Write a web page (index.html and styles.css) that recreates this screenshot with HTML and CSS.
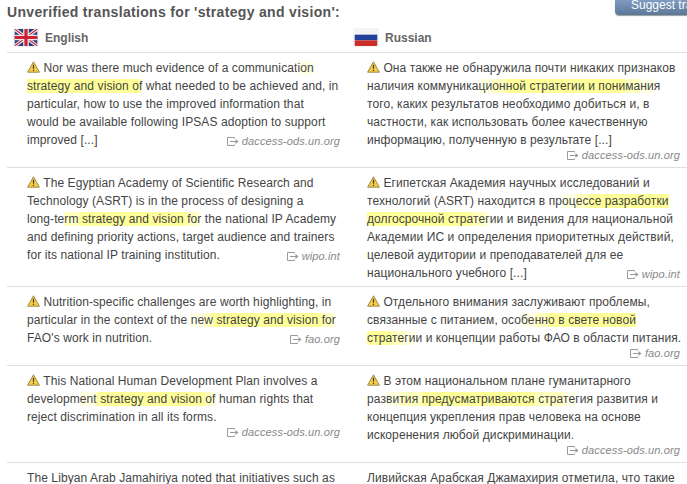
FILE: index.html
```html
<!DOCTYPE html>
<html lang="en">
<head>
<meta charset="utf-8">
<title>Unverified translations</title>
<link rel="stylesheet" href="styles.css">
</head>
<body>
<svg class="defs" width="0" height="0" aria-hidden="true">
  <symbol id="warn" viewBox="0 0 13 12">
    <path d="M6.5 .8 L12.4 11.2 H.6 Z" fill="#f5cc45" stroke="#9a8a50" stroke-width="1" stroke-linejoin="round"/>
    <path d="M6.5 3.8 V7.8 M6.5 8.8 V10" stroke="#4a3c10" stroke-width="1.2"/>
  </symbol>
  <symbol id="out" viewBox="0 0 12 9">
    <path d="M7.5 1.5 V.5 H.5 V8.5 H7.5 V7.5" fill="none" stroke="#999" stroke-width="1"/>
    <path d="M3 4.5 H9" stroke="#999" stroke-width="1"/>
    <path d="M8.5 2 L11.5 4.5 L8.5 7 Z" fill="#999"/>
  </symbol>
</svg>
<div class="top">
  <h2 class="title">Unverified translations for 'strategy and vision':</h2>
  <a class="suggest">Suggest translation</a>
</div>
<div class="table">
  <div class="row head">
    <div class="lang">
      <svg class="flag" viewBox="0 0 24 18"><rect width="24" height="18" fill="#2a3a7c"/><path d="M0 0 L24 18 M24 0 L0 18" stroke="#e8e8ee" stroke-width="3.6"/><path d="M0 0 L24 18 M24 0 L0 18" stroke="#c8283a" stroke-width="1.2"/><path d="M12 0 V18 M0 9 H24" stroke="#e8e8ee" stroke-width="6"/><path d="M12 0 V18 M0 9 H24" stroke="#cc2233" stroke-width="3.4"/></svg>
      <span>English</span>
    </div>
    <div class="lang">
      <svg class="flag" viewBox="0 0 24 18"><rect width="24" height="6" fill="#f4f4f4"/><rect y="6" width="24" height="6" fill="#23409a"/><rect y="12" width="24" height="6" fill="#cc2f2a"/></svg>
      <span>Russian</span>
    </div>
  </div>
  <div class="row">
    <div class="cell"><svg class="warn"><use href="#warn"/></svg> Nor was there much evidence of a communicat<mark class="lo">ion </mark><mark>strategy and vision o</mark><mark class="mid">f</mark> what needed to be achieved and, in particular, how to use the improved information that would be available following IPSAS adoption to support improved [...]<a class="src"><svg class="out"><use href="#out"/></svg> daccess-ods.un.org</a></div>
    <div class="cell"><svg class="warn"><use href="#warn"/></svg> Она также не обнаружила почти никаких признаков наличия коммуника<mark class="lo">ци</mark><mark class="mid">он</mark><mark>ной стратегии и пони</mark><mark class="mid">ма</mark><mark class="lo">ни</mark>я того, каких результатов необходимо добиться и, в частности, как использовать более качественную информацию, полученную в результате [...]<a class="src drop"><svg class="out"><use href="#out"/></svg> daccess-ods.un.org</a></div>
  </div>
  <div class="row">
    <div class="cell"><svg class="warn"><use href="#warn"/></svg> The Egyptian Academy of Scientific Research and Technology (ASRT) is in the process of designing a <span class="nb">long-te<mark class="mid">rm</mark></span><mark> strategy and vision </mark><mark class="mid">fo</mark><mark class="lo">r</mark> the national IP Academy and defining priority actions, target audience and trainers for its national IP training institution.<a class="src"><svg class="out"><use href="#out"/></svg> wipo.int</a></div>
    <div class="cell"><svg class="warn"><use href="#warn"/></svg> Египетская Академия научных исследований и технологий (ASRT) находится в пр<mark class="lo">оц</mark><mark class="mid">ес</mark><mark>се разработки долгосрочной стра</mark><mark class="mid">те</mark><mark class="lo">г</mark>ии и видения для национальной Академии ИС и определения приоритетных действий, целевой аудитории и преподавателей для ее национального учебного [...]<a class="src"><svg class="out"><use href="#out"/></svg> wipo.int</a></div>
  </div>
  <div class="row">
    <div class="cell"><svg class="warn"><use href="#warn"/></svg> Nutrition-specific challenges are worth highlighting, in particular in the context of the <mark class="lo">ne</mark><mark class="mid">w</mark><mark> strategy and vision </mark><mark class="mid">fo</mark><mark class="lo">r</mark> FAO's work in nutrition.<a class="src"><svg class="out"><use href="#out"/></svg> fao.org</a></div>
    <div class="cell"><svg class="warn"><use href="#warn"/></svg> Отдельного внимания заслуживают проблемы, связанные с питанием, осо<mark class="lo">бе</mark><mark class="mid">нн</mark><mark>о в свете новой стра</mark><mark class="mid">те</mark><mark class="lo">ги</mark>и и концепции работы ФАО в области питания.<a class="src drop"><svg class="out"><use href="#out"/></svg> fao.org</a></div>
  </div>
  <div class="row">
    <div class="cell"><svg class="warn"><use href="#warn"/></svg> This National Human Development Plan involves a developm<mark class="lo">ent</mark><mark> strategy and vision </mark><mark class="mid">o</mark><mark class="lo">f</mark> human rights that reject discrimination in all its forms.<a class="src drop"><svg class="out"><use href="#out"/></svg> daccess-ods.un.org</a></div>
    <div class="cell"><svg class="warn"><use href="#warn"/></svg> В этом национальном плане гуманитарного раз<mark class="lo">ви</mark><mark class="mid">тия </mark><mark>предусматриваются</mark><mark class="mid"> стра</mark><mark class="lo">те</mark>гия развития и концепция укрепления прав человека на основе искоренения любой дискриминации.<a class="src drop"><svg class="out"><use href="#out"/></svg> daccess-ods.un.org</a></div>
  </div>
  <div class="row">
    <div class="cell">The Libyan Arab Jamahiriya noted that initiatives such as</div>
    <div class="cell">Ливийская Арабская Джамахирия отметила, что такие</div>
  </div>
</div>
</body>
</html>
```
FILE: styles.css
```css
html, body {
  margin: 0;
  padding: 0;
  height: 484px;
  overflow: hidden;
  background: #fff;
}
body {
  font-family: "Liberation Sans", Arial, sans-serif;
  font-size: 12px;
  color: #444;
}
.defs { position: absolute; }
.top {
  display: flex;
  height: 23px;
  padding-left: 7px;
  overflow: hidden;
}
.title {
  flex: none;
  width: 608px;
  margin: 4px 0 0;
  font-size: 14px;
  line-height: 16px;
  font-weight: bold;
  color: #555;
  letter-spacing: .32px;
}
.suggest {
  flex: none;
  width: 72px;
  height: 15px;
  padding-left: 16px;
  box-sizing: border-box;
  line-height: 11px;
  color: #fff;
  border-radius: 0 0 0 4px;
  background: linear-gradient(#7f9cc0, #5b7899);
  box-shadow: 0 1px 1px #999;
  white-space: nowrap;
  overflow: hidden;
}
.table { margin-left: 7px; }
.row {
  display: grid;
  grid-template-columns: 338px 342px;
  border-bottom: 1px solid #dedede;
}
.row.head { height: 29px; align-items: center; }
.lang {
  display: flex;
  align-items: center;
  gap: 7px;
  padding-left: 7px;
  font-weight: bold;
  color: #666;
}
.lang + .lang { padding-left: 9px; }
.flag {
  flex: none;
  width: 24px;
  height: 17px;
  border-radius: 2px;
  box-shadow: 0 0 1px #888;
}
.cell {
  padding: 6px 6.5px 4px 20px;
  line-height: 18px;
  letter-spacing: .09px;
}
.cell + .cell { padding-left: 22px; padding-right: 5px; }
.cell::after { content: ""; display: block; clear: both; }
.nb { white-space: nowrap; }
mark { background: #ffff99; color: inherit; }
mark.mid { background: #ffffc0; }
mark.lo { background: #ffffe4; }
.warn {
  width: 13px;
  height: 12px;
  vertical-align: -1px;
}
.src {
  float: right;
  height: 14px;
  line-height: 14px;
  margin: 3px -1.5px 0 14px;
  font-size: 11px;
  font-style: italic;
  color: #888;
  white-space: nowrap;
  letter-spacing: .12px;
}
.cell + .cell .src { margin-right: 2px; }
.src.drop { margin-top: -1px; margin-bottom: 1px; }
.out {
  width: 12px;
  height: 9px;
  vertical-align: -1px;
}
```
